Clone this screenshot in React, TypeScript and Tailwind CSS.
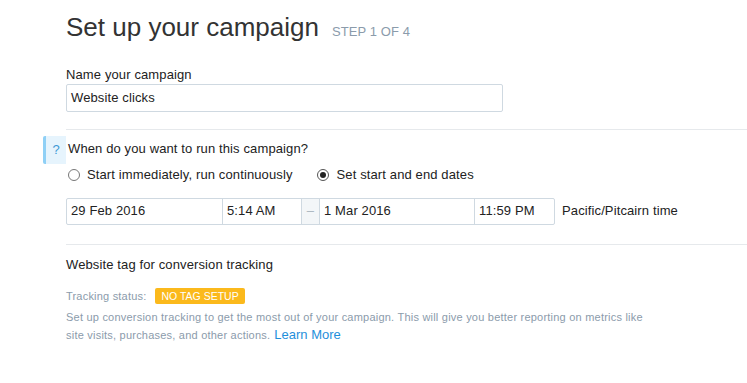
export default function App() {
  return (
    <div
      className="min-h-[383px] w-[747px] bg-white text-[#333] overflow-hidden"
      style={{ fontFamily: '"Liberation Sans", Arial, sans-serif' }}
    >
      <div className="pl-[66px] pt-[11px]">
        <div className="flex items-baseline">
          <h1 className="text-[26px] leading-[32px] text-[#333]">Set up your campaign</h1>
          <span className="ml-[13px] text-[13px] tracking-[0.1px] text-[#8b9bab]">STEP 1 OF 4</span>
        </div>

        <div className="mt-[24px]">
          <label className="block text-[13px] leading-[16px] tracking-[0.12px] text-[#222]">Name your campaign</label>
          <div className="mt-[1px] w-[437px] h-[28px] border border-[#cfd9e1] rounded-[2px] flex items-center px-[4px] text-[13px] tracking-[0.12px] text-[#222]">
            Website clicks
          </div>
        </div>

        <div className="mt-[17px] border-t border-[#e6e9ec]" />
      </div>

      <div className="flex pl-[43px] pt-[6px]">
        <div className="w-[23px] h-[28px] bg-[#e6f4fd] border-l-[3px] border-[#8fd0f6] rounded-l-[2px] flex items-center justify-center text-[13px] text-[#3d9ad6]">
          ?
        </div>
        <div className="pl-[2px] pt-[5px]">
          <div className="text-[13px] leading-[16px] tracking-[0.12px] text-[#222]">When do you want to run this campaign?</div>
          <div className="mt-[8px] flex items-center text-[13px] tracking-[0.12px] text-[#222]">
            <span className="w-[12px] h-[12px] rounded-full border border-[#777] bg-white" />
            <span className="ml-[7px]">Start immediately, run continuously</span>
            <span className="ml-[24px] w-[12px] h-[12px] rounded-full border border-[#555] bg-white flex items-center justify-center">
              <span className="w-[6px] h-[6px] rounded-full bg-[#222]" />
            </span>
            <span className="ml-[8px]">Set start and end dates</span>
          </div>
        </div>
      </div>

      <div className="pl-[66px]">
        <div className="mt-[13px] flex items-center">
          <div className="flex h-[27px] border border-[#cfd9e1] rounded-[2px] text-[13px] tracking-[0.12px] text-[#222]">
            <div className="w-[155px] flex items-center px-[4px]">29 Feb 2016</div>
            <div className="w-[79px] flex items-center px-[4px] border-l border-[#cfd9e1]">5:14 AM</div>
            <div className="w-[18px] flex items-center justify-center border-l border-[#cfd9e1] bg-[#f3f6f8] text-[#aab5bf]">–</div>
            <div className="w-[155px] flex items-center px-[4px] border-l border-[#cfd9e1]">1 Mar 2016</div>
            <div className="w-[80px] flex items-center px-[4px] border-l border-[#cfd9e1]">11:59 PM</div>
          </div>
          <span className="ml-[7px] text-[13px] tracking-[0.12px] text-[#222]">Pacific/Pitcairn time</span>
        </div>

        <div className="mt-[19px] border-t border-[#e6e9ec]" />

        <div className="mt-[12px] text-[13px] leading-[16px] tracking-[0.12px] text-[#222]">Website tag for conversion tracking</div>

        <div className="mt-[15px] flex items-center">
          <span className="text-[11px] tracking-[0.2px] text-[#8b9bab]">Tracking status:</span>
          <span className="ml-[9px] h-[16px] px-[6px] rounded-[2px] bg-[#fbb91c] text-white text-[10.5px] leading-[16px]">NO TAG SETUP</span>
        </div>

        <div className="mt-[5px] text-[11px] leading-[17px] tracking-[0.22px] text-[#8b9bab]">
          <div>Set up conversion tracking to get the most out of your campaign. This will give you better reporting on metrics like</div>
          <div className="flex items-baseline">
            <span>site visits, purchases, and other actions.</span>
            <a className="ml-[4px] text-[13px] leading-[17px] tracking-normal text-[#1f8fdb]">Learn More</a>
          </div>
        </div>
      </div>
    </div>
  );
}
